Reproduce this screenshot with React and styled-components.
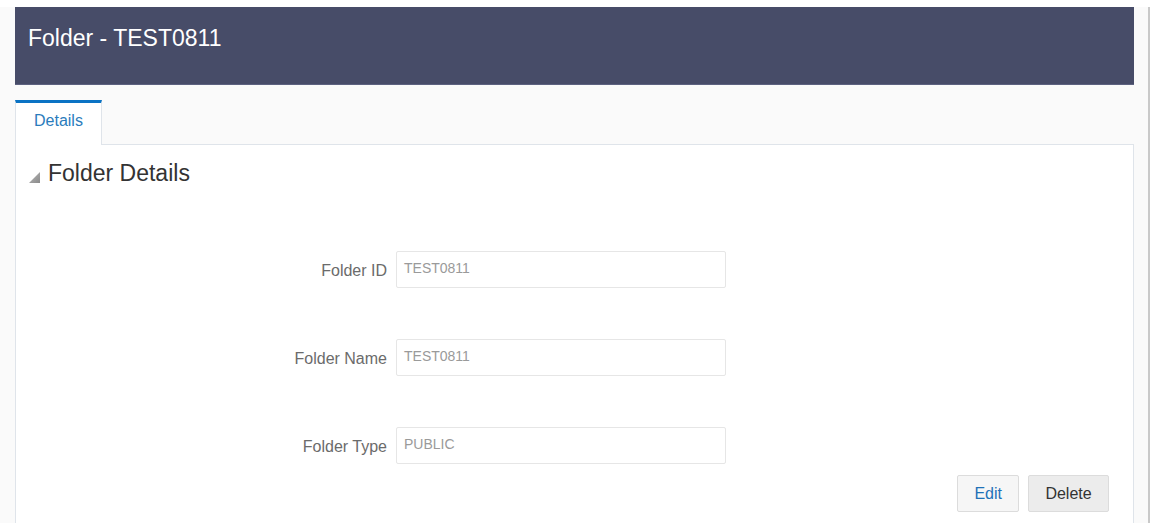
import React from "react";
import styled, { createGlobalStyle } from "styled-components";

const GlobalStyle = createGlobalStyle`
  html, body {
    margin: 0;
    padding: 0;
    background: #ffffff;
    font-family: "Liberation Sans", Arial, sans-serif;
    overflow: hidden;
  }
`;

const Page = styled.div`
  width: 1150px;
  height: 516px;
  margin-top: 7px;
  box-sizing: border-box;
  padding: 0 14px 0 15px;
  background: #fafafa;
  border-right: 2px solid #c9c9c9;
  display: flex;
  flex-direction: column;
`;

const TitleBar = styled.div`
  height: 78px;
  box-sizing: border-box;
  padding: 18px 13px 0;
  background: #474c68;
  border-bottom: 1px solid #5d6280;
  color: #ffffff;
  font-size: 23px;
  line-height: 27px;
`;

const TabStrip = styled.div`
  display: flex;
  margin-top: 15px;
`;

const Tab = styled.div`
  width: 87px;
  height: 45px;
  box-sizing: border-box;
  border-top: 3px solid #0a73c4;
  border-left: 1px solid #dfe4ea;
  border-right: 1px solid #dfe4ea;
  background: #ffffff;
  color: #2a7cbc;
  font-size: 16px;
  padding: 9px 0 0 18px;
  margin-bottom: -1px;
  position: relative;
  z-index: 1;
`;

const Panel = styled.div`
  flex: 1;
  background: #ffffff;
  border: 1px solid #dfe4ea;
  border-bottom: none;
  display: flex;
  flex-direction: column;
`;

const SectionHeader = styled.div`
  display: flex;
  align-items: center;
  gap: 8px;
  padding: 14px 0 0 13px;
  color: #333333;
  font-size: 23px;
  line-height: 28px;
`;

const Form = styled.div`
  display: grid;
  grid-template-columns: 371px 330px;
  column-gap: 9px;
  row-gap: 51px;
  margin-top: 64px;
`;

const Label = styled.label`
  justify-self: end;
  align-self: center;
  color: #6b6b6b;
  font-size: 16px;
  padding-top: 2px;
`;

const Field = styled.div`
  height: 37px;
  box-sizing: border-box;
  border: 1px solid #e6e6e6;
  border-radius: 2px;
  background: #ffffff;
  color: #9a9a9a;
  font-size: 14px;
  padding: 8px 0 0 7px;
`;

const Actions = styled.div`
  display: flex;
  justify-content: flex-end;
  gap: 9px;
  padding-right: 24px;
  margin-top: 11px;
`;

const Button = styled.button`
  height: 37px;
  box-sizing: border-box;
  padding: 0 16px;
  min-width: ${(p) => p.$width}px;
  font-family: "Liberation Sans", Arial, sans-serif;
  font-size: 16px;
  border: 1px solid #dcdcdc;
  border-radius: 2px;
  background: ${(p) => (p.$primary ? "#f6f6f6" : "#ececec")};
  color: ${(p) => (p.$primary ? "#1f72b8" : "#333333")};
`;

const Expander = () => (
  <svg width="11" height="11" viewBox="0 0 11 11" style={{ marginTop: 8 }}>
    <defs>
      <linearGradient id="tri" x1="0" y1="0" x2="1" y2="1">
        <stop offset="0" stopColor="#b8b8b8" />
        <stop offset="1" stopColor="#8a8a8a" />
      </linearGradient>
    </defs>
    <polygon points="11,0 11,11 0,11" fill="url(#tri)" />
  </svg>
);

const fields = [
  { label: "Folder ID", value: "TEST0811" },
  { label: "Folder Name", value: "TEST0811" },
  { label: "Folder Type", value: "PUBLIC" },
];

export default function App() {
  return (
    <>
      <GlobalStyle />
      <Page>
        <TitleBar>Folder - TEST0811</TitleBar>
        <TabStrip>
          <Tab>Details</Tab>
        </TabStrip>
        <Panel>
          <SectionHeader>
            <Expander />
            Folder Details
          </SectionHeader>
          <Form>
            {fields.map((f) => (
              <React.Fragment key={f.label}>
                <Label>{f.label}</Label>
                <Field>{f.value}</Field>
              </React.Fragment>
            ))}
          </Form>
          <Actions>
            <Button $primary $width={61}>Edit</Button>
            <Button $width={81}>Delete</Button>
          </Actions>
        </Panel>
      </Page>
    </>
  );
}
